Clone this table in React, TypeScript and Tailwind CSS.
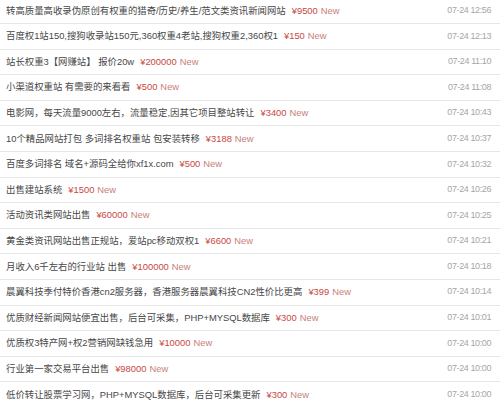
import React from "react";

const rows: [string, string, string][] = [
  ["转高质量高收录伪原创有权重的猎奇/历史/养生/范文类资讯新闻网站", "9500", "07-24 12:56"],
  ["百度权1站150,搜狗收录站150元,360权重4老站,搜狗权重2,360权1", "150", "07-24 12:13"],
  ["站长权重3【网赚站】 报价20w", "200000", "07-24 11:10"],
  ["小渠道权重站 有需要的来看看", "500", "07-24 11:08"],
  ["电影网，每天流量9000左右，流量稳定,因其它项目整站转让", "3400", "07-24 10:43"],
  ["10个精品网站打包 多词排名权重站 包安装转移", "3188", "07-24 10:37"],
  ["百度多词排名 域名+源码全给你xf1x.com", "500", "07-24 10:32"],
  ["出售建站系统", "1500", "07-24 10:26"],
  ["活动资讯类网站出售", "60000", "07-24 10:25"],
  ["黄金类资讯网站出售正规站，爱站pc移动双权1", "6600", "07-24 10:21"],
  ["月收入6千左右的行业站 出售", "100000", "07-24 10:18"],
  ["晨翼科技季付特价香港cn2服务器，香港服务器晨翼科技CN2性价比更高", "399", "07-24 10:14"],
  ["优质财经新闻网站便宜出售，后台可采集，PHP+MYSQL数据库", "300", "07-24 10:01"],
  ["优质权3特产网+权2营销网缺钱急用", "10000", "07-24 10:00"],
  ["行业第一家交易平台出售", "98000", "07-24 10:00"],
  ["低价转让股票学习网，PHP+MYSQL数据库，后台可采集更新", "300", "07-24 10:00"],
];

export default function App() {
  return (
    <div
      className="w-[500px] h-[405px] overflow-hidden bg-white"
      style={{ fontFamily: '"Liberation Sans", "Noto Sans CJK SC", sans-serif' }}
    >
      <div className="-mt-[1.6px]">
        {rows.map(([title, price, date], i) => (
          <div
            key={i}
            className="h-[25.6px] flex items-center justify-between pl-[6px] pr-[9px] border-b border-[#e6e6e6]"
          >
            <div className="flex items-center whitespace-nowrap text-[9.4px] text-[#474747]">
              <span>{title}</span>
              <span className="ml-[6px] text-[#c8483f]">¥{price}</span>
              <span className="ml-[3px] text-[#c98078]">New</span>
            </div>
            <div className="text-[9px] tracking-[-0.4px] text-[#a6a6a6] whitespace-nowrap">{date}</div>
          </div>
        ))}
      </div>
    </div>
  );
}
